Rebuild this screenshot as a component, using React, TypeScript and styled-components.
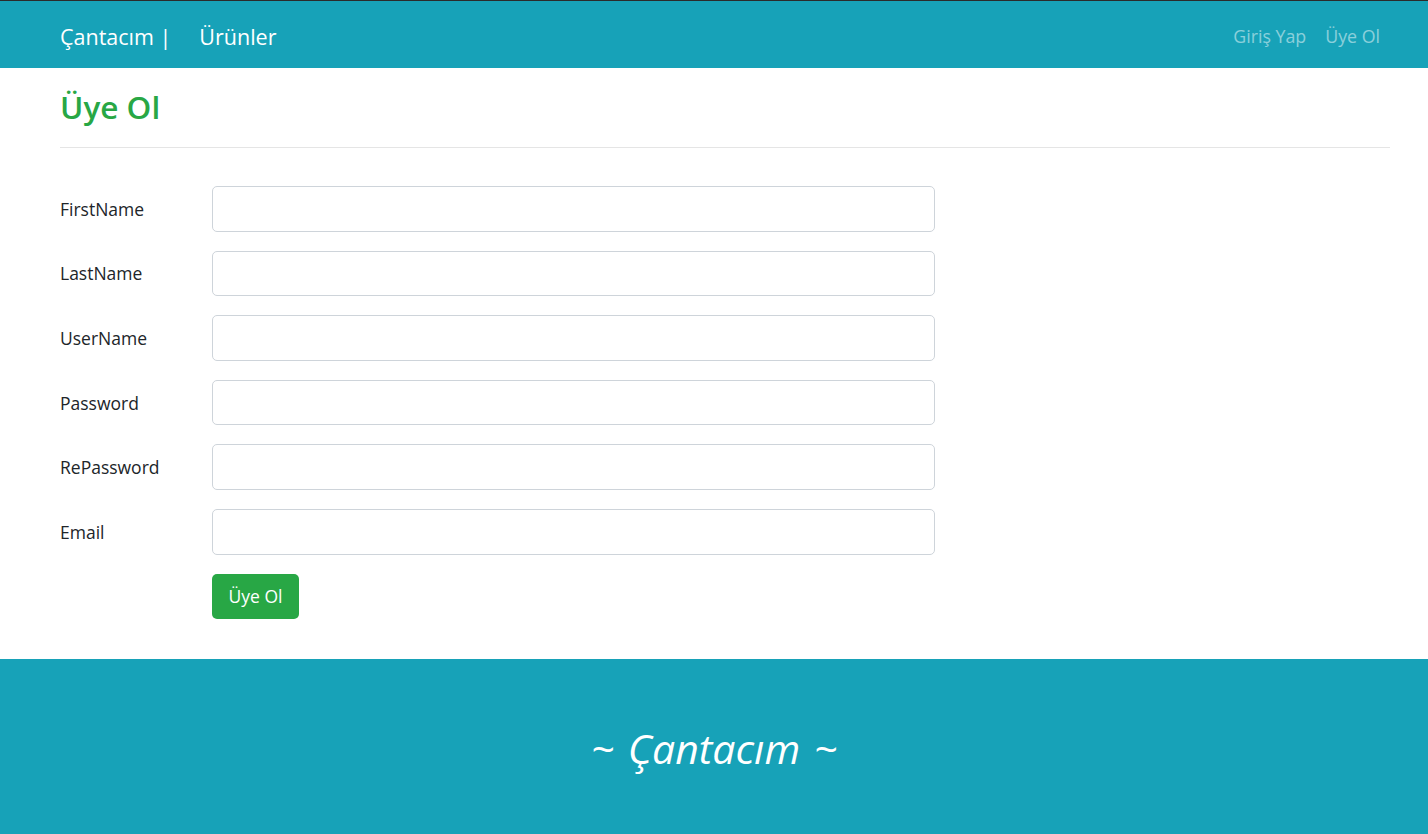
import React from "react";
import styled, { createGlobalStyle } from "styled-components";

const Global = createGlobalStyle`
  html, body { margin: 0; padding: 0; background: #fff; }
  body { font-family: "Open Sans", "Noto Sans", sans-serif; color: #212529; }
  * { box-sizing: border-box; }
`;

const Page = styled.div`
  display: flex;
  flex-direction: column;
  min-height: 834px;
`;

const NavBar = styled.nav`
  height: 68px;
  background: #17a2b8;
  border-top: 1px solid #2b2b2b;
  display: flex;
  align-items: center;
  justify-content: space-between;
  padding: 3px 48px 0 60px;
`;

const NavGroup = styled.div<{ $gap: number }>`
  display: flex;
  align-items: center;
  gap: ${(p) => p.$gap}px;
`;

const Brand = styled.a`
  color: #fff;
  font-size: 21.5px;
  text-decoration: none;
`;

const NavLink = styled.a`
  color: rgba(255, 255, 255, 0.5);
  font-size: 17.8px;
  text-decoration: none;
`;

const Main = styled.main`
  padding: 0 38px 0 60px;
  flex: 1;
`;

const Title = styled.h2`
  margin: 0;
  padding-top: 21px;
  height: 79px;
  color: #28a745;
  font-size: 31.5px;
  font-weight: 600;
  line-height: 36px;
`;

const Divider = styled.hr`
  margin: 0;
  border: 0;
  border-top: 1px solid #e5e5e5;
`;

const Form = styled.form`
  display: flex;
  flex-direction: column;
  gap: 19px;
  padding: 38px 0 38px;
`;

const Row = styled.div`
  display: flex;
  align-items: center;
`;

const Label = styled.label`
  width: 152px;
  font-size: 17.5px;
  color: #212529;
`;

const Input = styled.input`
  width: 723px;
  height: 45.6px;
  border: 1px solid #ced4da;
  border-radius: 5px;
  font: inherit;
  padding: 0 14px;
`;

const Button = styled.button`
  margin-left: 152px;
  width: 87px;
  height: 45.6px;
  background: #28a745;
  color: #fff;
  border: 0;
  border-radius: 5px;
  font-family: inherit;
  font-size: 17.5px;
`;

const Footer = styled.footer`
  height: 175px;
  background: #17a2b8;
  display: flex;
  align-items: center;
  justify-content: center;
  padding-top: 2px;
`;

const FooterText = styled.h1`
  margin: 0;
  color: #fff;
  font-style: italic;
  font-weight: 400;
  font-size: 41px;
  word-spacing: 3px;
`;

const fields = ["FirstName", "LastName", "UserName", "Password", "RePassword", "Email"];

export default function App() {
  return (
    <Page>
      <Global />
      <NavBar>
        <NavGroup $gap={28}>
          <Brand href="#">Çantacım |</Brand>
          <Brand href="#">Ürünler</Brand>
        </NavGroup>
        <NavGroup $gap={19}>
          <NavLink href="#">Giriş Yap</NavLink>
          <NavLink href="#">Üye Ol</NavLink>
        </NavGroup>
      </NavBar>
      <Main>
        <Title>Üye Ol</Title>
        <Divider />
        <Form>
          {fields.map((f) => (
            <Row key={f}>
              <Label>{f}</Label>
              <Input type={f.includes("Password") ? "password" : "text"} />
            </Row>
          ))}
          <Row>
            <Button type="button">Üye Ol</Button>
          </Row>
        </Form>
      </Main>
      <Footer>
        <FooterText>~ Çantacım ~</FooterText>
      </Footer>
    </Page>
  );
}
